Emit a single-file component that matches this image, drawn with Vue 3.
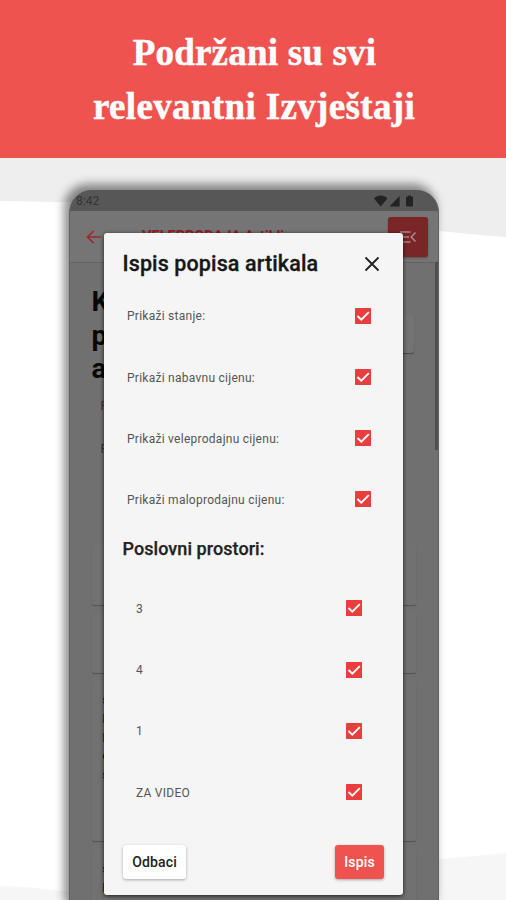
<script setup>
import { ref } from 'vue'

const options = ref([
  { label: 'Prikaži stanje:', on: true },
  { label: 'Prikaži nabavnu cijenu:', on: true },
  { label: 'Prikaži veleprodajnu cijenu:', on: true },
  { label: 'Prikaži maloprodajnu cijenu:', on: true }
])
const places = ref([
  { label: '3', on: true },
  { label: '4', on: true },
  { label: '1', on: true },
  { label: 'ZA VIDEO', on: true }
])
</script>

<template>
  <div class="page">
    <svg class="waves" viewBox="0 0 506 900" aria-hidden="true">
      <path d="M0 158H506V237C440 232 380 224 300 216C200 204 100 203 0 201Z" fill="#eeeeee" />
      <path d="M0 886C30 886 60 892 100 894L430 860L506 853V900H0Z" fill="#f6f6f6" />
    </svg>
    <header class="banner">
      <h1><span class="l1">Podržani su svi</span><span class="l2">relevantni Izvještaji</span></h1>
    </header>

    <main class="stage">
      <div class="phone">
        <div class="status">
          <span>8:42</span>
          <svg class="sys" viewBox="0 0 40 12">
            <path d="M0 3.4C3.8-.4 9.6-.4 13.4 3.4L6.7 11.4Z" />
            <path d="M15.5 11.4L25.6 1V11.4Z" />
            <path d="M34 .4h3v1h.8q1.2 0 1.2 1.2v7.6q0 1.2-1.2 1.2h-4.600q-1.200 0-1.200-1.200v-7.600q0-1.200 1.200-1.200h.8z" />
          </svg>
        </div>
        <div class="appbar">
          <svg class="back" viewBox="0 0 16 14"><path d="M15 7H1.500M7.500 1L1.500 7L7.500 13" /></svg>
          <span class="apptitle">VELEPRODAJA Artikli</span>
          <div class="menu">
            <svg viewBox="0 0 20 14"><path d="M2 2h10.500M2 7h9M2 12h10.500M17.500 2.500L13.200 7L17.500 11.500" /></svg>
          </div>
        </div>
        <div class="content">
          <div class="top">
            <h2>K<br>p<br>a</h2>
            <div class="action"></div>
          </div>
          <div class="fields"><span>P</span><span>P</span></div>
          <div class="card first"></div>
          <div class="card second"></div>
          <div class="card detail"><b>s</b><b>N</b><b>B</b><b>c</b><b>s</b></div>
          <div class="card detail last"><b>s</b><b>N</b></div>
        </div>
        <i class="scrollbar"></i>
      </div>

      <section class="dialog">
        <div class="dhead">
          <h2>Ispis popisa artikala</h2>
          <svg viewBox="0 0 16 16"><path d="M1.500 1.500L14.500 14.500M14.500 1.500L1.500 14.500" /></svg>
        </div>
        <div class="rows opts">
          <div v-for="o in options" :key="o.label" class="row" @click="o.on = !o.on">
            <span>{{ o.label }}</span>
            <svg class="check" viewBox="0 0 16 16"><rect width="16" height="16" rx=".6" /><path v-if="o.on" d="M2.500 8L6.300 11.700L13.800 4.100" /></svg>
          </div>
        </div>
        <h3>Poslovni prostori:</h3>
        <div class="rows places">
          <div v-for="p in places" :key="p.label" class="row" @click="p.on = !p.on">
            <span>{{ p.label }}</span>
            <svg class="check" viewBox="0 0 16 16"><rect width="16" height="16" rx=".6" /><path v-if="p.on" d="M2.500 8L6.300 11.700L13.800 4.100" /></svg>
          </div>
        </div>
        <footer>
          <button class="cancel">Odbaci</button>
          <button class="print">Ispis</button>
        </footer>
      </section>
    </main>
  </div>
</template>

<style>
body { margin: 0; overflow: hidden; }
</style>

<style scoped>
* { box-sizing: border-box; }
.page { position: relative; width: 506px; height: 900px; overflow: hidden; background: #fff; font-family: Roboto, "Liberation Sans", sans-serif; }
.waves { position: absolute; inset: 0; width: 506px; height: 900px; }
.banner { position: relative; height: 158px; padding-top: 26px; background: #ef5350; }
h1, h2, h3 { margin: 0; }
h1 { display: flex; flex-direction: column; align-items: center; color: #fff; font: bold 37px/54px "Liberation Serif", serif; white-space: nowrap; -webkit-text-stroke: .5px #fff; }
.l1 { letter-spacing: .2px; padding-left: 3px; }
.l2 { letter-spacing: .35px; padding-left: 2px; }
.stage { position: relative; height: 742px; padding: 32px 67px 0 69px; }
.phone { position: relative; height: 730px; border-radius: 22px 22px 0 0; overflow: hidden; background: #707070; border-left: 1px solid #626262; border-right: 1px solid #606060; }
.stage::before { content: ""; position: absolute; left: 69px; top: 32px; width: 370px; height: 730px; border-radius: 22px; box-shadow: -4px -5px 10px 1px rgba(0,0,0,.45); }
.status { height: 21px; padding: 0 24px 0 6px; background: #575757; display: flex; align-items: center; justify-content: space-between; color: #343434; font-size: 12px; line-height: 23px; }
.status span { padding-top: 1px; }
.sys { width: 40px; height: 12px; fill: #232323; }
.appbar { height: 52px; padding: 1px 10px 0 16px; display: flex; align-items: center; background: #757575; border-bottom: 1px solid #626262; }
.back { width: 16px; height: 14px; fill: none; stroke: #9c282c; stroke-width: 1.700; }
.apptitle { margin-left: 40px; flex: 1; color: #941c24; font-weight: 700; font-size: 14.500px; line-height: 20px; }
.menu { width: 40px; height: 40px; border-radius: 3px; background: #7a2627; display: flex; align-items: center; justify-content: center; box-shadow: 0 1px 2px rgba(0,0,0,.3); }
.menu svg { width: 20px; height: 14px; fill: none; stroke: #ad8586; stroke-width: 1.600; }
.content { padding: 22px 22px 0 21.500px; }
.top { display: flex; justify-content: space-between; height: 111px; }
.top h2 { width: 140px; color: #080808; font: 700 28px/33.500px Roboto, sans-serif; }
.action { width: 60px; height: 39px; margin: 29px 2px 0 0; border-radius: 3px; background: #737373; box-shadow: 0 1px 1px rgba(0,0,0,.4); }
.fields { height: 148px; padding: 0 0 0 9px; display: flex; flex-direction: column; font-size: 12px; line-height: 20px; gap: 23px; color: #333; }
.card { height: 61px; margin-bottom: 7px; border-radius: 2px; background: #717171; box-shadow: 0 1px 1px rgba(0,0,0,.28); }
.card.detail { height: 161px; padding: 11px 11px; display: flex; flex-direction: column; color: #161616; font-size: 13px; line-height: 18.800px; }
.card.last { padding-top: 12px; }
.scrollbar { position: absolute; right: 0; top: 72px; width: 3px; height: 188px; background: #4f4f4f; }
.dialog { position: absolute; left: 104px; top: 75px; width: 299px; height: 662px; border-radius: 3px; background: #f5f5f5; box-shadow: 0 1px 4px rgba(0,0,0,.75); }
.dhead { height: 52px; padding: 9px 23px 0 18.500px; display: flex; justify-content: space-between; }
.dhead h2 { font-size: 21.500px; line-height: 43px; font-weight: 500; letter-spacing: .12px; -webkit-text-stroke: .3px #171717; color: #171717; white-space: nowrap; }
.dhead svg { width: 16px; height: 16px; margin-top: 14px; fill: none; stroke: #202020; stroke-width: 1.800; }
.row { height: 61.200px; display: flex; align-items: center; justify-content: space-between; font-size: 12px; letter-spacing: .26px; color: #555; }
.row span { padding-top: 1.500px; }
.opts .row { padding: 0 32px 0 23px; }
.places .row { padding: 0 41px 0 32px; }
.check { width: 16px; height: 16px; }
.check rect { fill: #e83e3d; }
.check path { fill: none; stroke: #fff; stroke-width: 1.900; }
h3 { height: 48px; padding-left: 18.500px; font-size: 18px; line-height: 38px; font-weight: 500; letter-spacing: .06px; -webkit-text-stroke: .25px #222; color: #222; }
footer { padding: 22.500px 19px 0 19px; display: flex; justify-content: space-between; }
button { height: 34px; border: 0; padding: 0; border-radius: 3px; font: 500 14px Roboto, sans-serif; letter-spacing: .15px; box-shadow: 0 1px 3px rgba(0,0,0,.32); }
.cancel { width: 63px; background: #fff; color: #222; }
.print { width: 49px; background: #ef5350; color: #fff; }
</style>
